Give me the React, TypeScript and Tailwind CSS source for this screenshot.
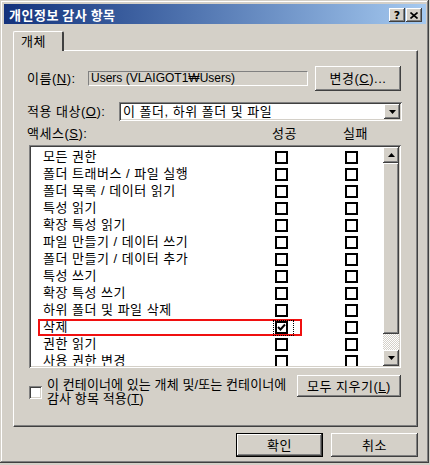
import React from "react";

const raised =
  "bg-[#d4d0c8] shadow-[inset_-1px_-1px_#404040,inset_1px_1px_#ffffff,inset_-2px_-2px_#808080,inset_2px_2px_#d4d0c8]";
const sunken =
  "shadow-[inset_1px_1px_#808080,inset_-1px_-1px_#ffffff,inset_2px_2px_#404040,inset_-2px_-2px_#d4d0c8]";

function Arrow({ up }: { up?: boolean }) {
  return (
    <svg width="7" height="4" viewBox="0 0 7 4">
      {up ? <polygon points="3.5,0 7,4 0,4" fill="#000" /> : <polygon points="0,0 7,0 3.5,4" fill="#000" />}
    </svg>
  );
}

function Box({ checked }: { checked?: boolean }) {
  return (
    <div className="w-[13px] h-[13px] border-2 border-black bg-white flex items-center justify-center shrink-0">
      {checked && (
        <svg width="9" height="9" viewBox="0 0 9 9">
          <polyline points="1,4 3.5,6.5 8,1.5" fill="none" stroke="#000" strokeWidth="2" />
        </svg>
      )}
    </div>
  );
}

const rows = [
  "모든 권한",
  "폴더 트래버스 / 파일 실행",
  "폴더 목록 / 데이터 읽기",
  "특성 읽기",
  "확장 특성 읽기",
  "파일 만들기 / 데이터 쓰기",
  "폴더 만들기 / 데이터 추가",
  "특성 쓰기",
  "확장 특성 쓰기",
  "하위 폴더 및 파일 삭제",
  "삭제",
  "권한 읽기",
  "사용 권한 변경",
];

export default function App() {
  return (
    <div className="w-[430px] h-[465px] bg-[#d4d0c8] font-['Liberation_Sans','Noto_Sans_CJK_KR',sans-serif] text-[13px] tracking-[0.5px] text-black leading-[15px]">
      <div className="w-[429px] h-[463px] pl-[4px] pr-[3px] pt-[4px] flex flex-col shadow-[inset_-1px_-1px_#404040,inset_1px_1px_#d4d0c8,inset_-2px_-2px_#808080,inset_2px_2px_#ffffff]">
        {/* title bar */}
        <div className="h-[20px] flex items-center bg-gradient-to-r from-[#14327c] to-[#a6caf0] pl-[5px] pr-[4px]">
          <span className="text-white font-bold text-[13px] leading-[15px] tracking-[0.5px] font-['Noto_Sans_CJK_KR',sans-serif]">
            개인정보 감사 항목
          </span>
          <div className="ml-auto flex gap-[1px] mt-[2px]">
            <div className={`${raised} w-[16px] h-[14px] flex items-center justify-center`}>
              <span className="font-bold text-[11px] leading-[11px] tracking-normal font-['DejaVu_Sans',sans-serif]">?</span>
            </div>
            <div className={`${raised} w-[16px] h-[14px] flex items-center justify-center`}>
              <svg width="8" height="7" viewBox="0 0 8 7">
                <path d="M0.5 0.5 L7.5 6.5 M7.5 0.5 L0.5 6.5" stroke="#000" strokeWidth="1.6" />
              </svg>
            </div>
          </div>
        </div>

        {/* content */}
        <div className="flex flex-col pl-[9px] pr-[8px] pt-[7px]">
          {/* tab */}
          <div className="relative z-10 -mb-[1px] w-[51px] h-[20px] bg-[#d4d0c8] border-l border-t border-white border-r-2 border-r-[#404040] rounded-tl-[2px] rounded-tr-[2px] flex items-center pl-[7px]">
            <span>개체</span>
          </div>
          {/* panel */}
          <div className="h-[377px] border-l border-t border-l-white border-t-white border-r border-b border-r-[#404040] border-b-[#404040] shadow-[inset_-1px_-1px_#808080] flex flex-col pl-[13px] pt-[15px]">
            {/* name row */}
            <div className="h-[25px] flex items-center">
              <div className="w-[61px] whitespace-nowrap">
                이름(<span className="underline">N</span>):
              </div>
              <div className="w-[220px] h-[15px] text-[12px] tracking-normal border-t border-l border-t-[#808080] border-l-[#808080] border-b border-r border-b-white border-r-white flex items-center pl-[2px]">
                Users (VLAIGOT1₩Users)
              </div>
              <div className={`${raised} ml-[7px] w-[86px] h-[25px] flex items-center justify-center`}>
                변경(<span className="underline">C</span>)...
              </div>
            </div>
            {/* apply row */}
            <div className="mt-[11px] h-[19px] flex items-center">
              <div className="w-[92px] whitespace-nowrap">
                적용 대상(<span className="underline">O</span>):
              </div>
              <div className={`${sunken} bg-white w-[283px] h-[19px] p-[2px] flex items-center`}>
                <div className="flex-1 pl-[2px] whitespace-nowrap">이 폴더, 하위 폴더 및 파일</div>
                <div className={`${raised} w-[16px] h-[15px] flex items-center justify-center`}>
                  <Arrow />
                </div>
              </div>
            </div>
            {/* header */}
            <div className="mt-[5px] h-[14px] flex items-center">
              <div className="w-[245px]">
                액세스(<span className="underline">S</span>):
              </div>
              <div>성공</div>
              <div className="ml-[46px]">실패</div>
            </div>
            {/* list */}
            <div className={`${sunken} mt-[5px] ml-[2px] w-[372px] h-[223px] bg-white p-[2px] flex`}>
              <div className="relative flex-1 overflow-hidden pt-[2px]">
                {rows.map((r, i) => (
                  <div key={r} className="h-[17px] flex items-center">
                    <div className="relative -top-[1px] w-[244px] pl-[12px] whitespace-nowrap leading-[14px]">{r}</div>
                    <Box checked={i === 10} />
                    <div className="ml-[57px]">
                      <Box />
                    </div>
                  </div>
                ))}
                <div className="absolute left-[7px] top-[172px] w-[264px] h-[17px] border-2 border-[#f01010]" />
                <div className="absolute left-[242px] top-[173px] w-[21px] h-[16px] border border-dotted border-black" />
              </div>
              <div className="w-[16px] flex flex-col">
                <div className={`${raised} h-[16px] flex items-center justify-center`}>
                  <Arrow up />
                </div>
                <div className={`${raised} h-[171px]`} />
                <div className="flex-1 bg-[repeating-conic-gradient(#ffffff_0%_25%,#d4d0c8_0%_50%)] bg-[length:2px_2px]" />
                <div className={`${raised} h-[16px] flex items-center justify-center`}>
                  <Arrow />
                </div>
              </div>
            </div>
            {/* bottom row */}
            <div className="mt-[7px] ml-[2px] w-[372px] h-[22px] flex justify-between">
              <div className="flex items-center mt-[3px] self-start">
                <div className={`${sunken} bg-white w-[13px] h-[13px]`} />
                <div className="ml-[5px] leading-[14px] tracking-[0.1px] whitespace-nowrap">
                  <div>이 컨테이너에 있는 개체 및/또는 컨테이너에</div>
                  <div>
                    감사 항목 적용(<span className="underline">T</span>)
                  </div>
                </div>
              </div>
              <div className={`${raised} w-[104px] h-[22px] flex items-center justify-center whitespace-nowrap`}>
                모두 지우기(<span className="underline">L</span>)
              </div>
            </div>
          </div>
          {/* dialog buttons */}
          <div className="mt-[6px] flex justify-end gap-[8px]">
            <div className="w-[87px] h-[24px] border border-black">
              <div className={`${raised} w-full h-full flex items-center justify-center`}>확인</div>
            </div>
            <div className={`${raised} w-[87px] h-[24px] flex items-center justify-center`}>취소</div>
          </div>
        </div>
      </div>
    </div>
  );
}
